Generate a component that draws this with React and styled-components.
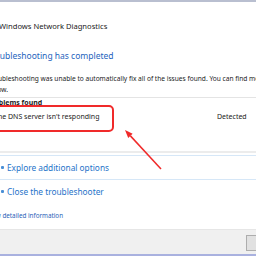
import React from "react";
import styled, { createGlobalStyle } from "styled-components";

const GlobalStyle = createGlobalStyle`
  html, body {
    margin: 0;
    padding: 0;
    background: #ffffff;
  }
`;

const Window = styled.div`
  position: relative;
  width: 256px;
  height: 256px;
  overflow: hidden;
  background: #ffffff;
  border-top: 2px solid #b9bfd0;
  box-sizing: border-box;
  display: flex;
  flex-direction: column;
  font-family: "Noto Sans", "Open Sans", sans-serif;
  color: #1b1b1b;
`;

const TitleBar = styled.div`
  padding-top: 19px;
  margin-left: -1px;
  font-size: 7.6px;
  line-height: 10px;
  white-space: nowrap;
`;

const Main = styled.div`
  display: flex;
  flex-direction: column;
`;

const Heading = styled.h1`
  margin: 18px 0 0 -13px;
  font-size: 8.5px;
  line-height: 14px;
  font-weight: 400;
  color: #2563bd;
  white-space: nowrap;
`;

const Description = styled.p`
  margin: 10px 0 0 -12px;
  font-size: 6.6px;
  line-height: 11px;
  white-space: nowrap;
`;

const ProblemTable = styled.div`
  margin-top: 2px;
  border-top: 1px solid #e4e4e4;
  display: flex;
  flex-direction: column;
`;

const TableHead = styled.div`
  margin-left: -13px;
  font-size: 7px;
  font-weight: 700;
  line-height: 10px;
`;

const ProblemRow = styled.div`
  margin-top: 4px;
  display: grid;
  grid-template-columns: 217px 1fr;
  font-size: 7px;
  line-height: 10px;
  white-space: nowrap;
`;

const ProblemName = styled.span`
  margin-left: -6px;
`;

const CommandList = styled.div`
  margin-top: 29px;
  padding-top: 2px;
  border-top: 2px solid #ececec;
  display: flex;
  flex-direction: column;
`;

const CommandLink = styled.div`
  height: 23px;
  border-top: 1px solid #d6e7f7;
  display: flex;
  align-items: center;
  gap: 3px;
  font-size: 8.3px;
  color: #1f73c9;
  white-space: nowrap;
`;

const LinkArrow = styled.span`
  width: 3px;
  height: 3px;
  margin-left: 1px;
  border-radius: 1px;
  background: #4a8fd6;
  flex: none;
`;

const DetailLink = styled.div`
  margin: 8px 0 0 -13px;
  font-size: 6.3px;
  line-height: 10px;
  color: #2a62b8;
  white-space: nowrap;
`;

const Footer = styled.div`
  margin-top: auto;
  height: 24px;
  background: #f0f0f0;
  border-top: 1px solid #e6e6e6;
  border-bottom: 2px solid #a9b1df;
  display: flex;
  align-items: center;
  justify-content: flex-end;
`;

const FooterButton = styled.div`
  width: 60px;
  height: 14px;
  margin-right: -52px;
  margin-top: 1px;
  background: #e1e1e1;
  border: 1px solid #adadad;
  flex: none;
`;

const Highlight = styled.div`
  position: absolute;
  left: -10px;
  top: 103px;
  width: 124px;
  height: 27px;
  box-sizing: border-box;
  border: 2px solid #f02a2a;
  border-radius: 5px;
`;

const Overlay = styled.svg`
  position: absolute;
  left: 0;
  top: 0;
  pointer-events: none;
`;

function PointerArrow() {
  const tip = [125, 126];
  const tail = [161, 165];
  const dx = tail[0] - tip[0];
  const dy = tail[1] - tip[1];
  const len = Math.hypot(dx, dy);
  const ux = dx / len;
  const uy = dy / len;
  const bx = tip[0] + ux * 8;
  const by = tip[1] + uy * 8;
  const px = -uy * 3;
  const py = ux * 3;
  return (
    <Overlay width="256" height="256" viewBox="0 -2 256 256">
      <line x1={bx} y1={by} x2={tail[0]} y2={tail[1]} stroke="#f02a2a" strokeWidth="1.5" />
      <polygon
        points={`${tip[0]},${tip[1]} ${bx + px},${by + py} ${bx - px},${by - py}`}
        fill="#f02a2a"
      />
    </Overlay>
  );
}

export default function App() {
  return (
    <>
      <GlobalStyle />
      <Window>
        <TitleBar>Windows Network Diagnostics</TitleBar>
        <Main>
          <Heading>Troubleshooting has completed</Heading>
          <Description>
            Troubleshooting was unable to automatically fix all of the issues found. You can find more details
            <br />
            below.
          </Description>
          <ProblemTable>
            <TableHead>Problems found</TableHead>
            <ProblemRow>
              <ProblemName>The DNS server isn't responding</ProblemName>
              <span>Detected</span>
            </ProblemRow>
          </ProblemTable>
          <CommandList>
            <CommandLink>
              <LinkArrow />
              Explore additional options
            </CommandLink>
            <CommandLink>
              <LinkArrow />
              Close the troubleshooter
            </CommandLink>
          </CommandList>
          <DetailLink>View detailed information</DetailLink>
        </Main>
        <Footer>
          <FooterButton />
        </Footer>
        <Highlight />
        <PointerArrow />
      </Window>
    </>
  );
}
